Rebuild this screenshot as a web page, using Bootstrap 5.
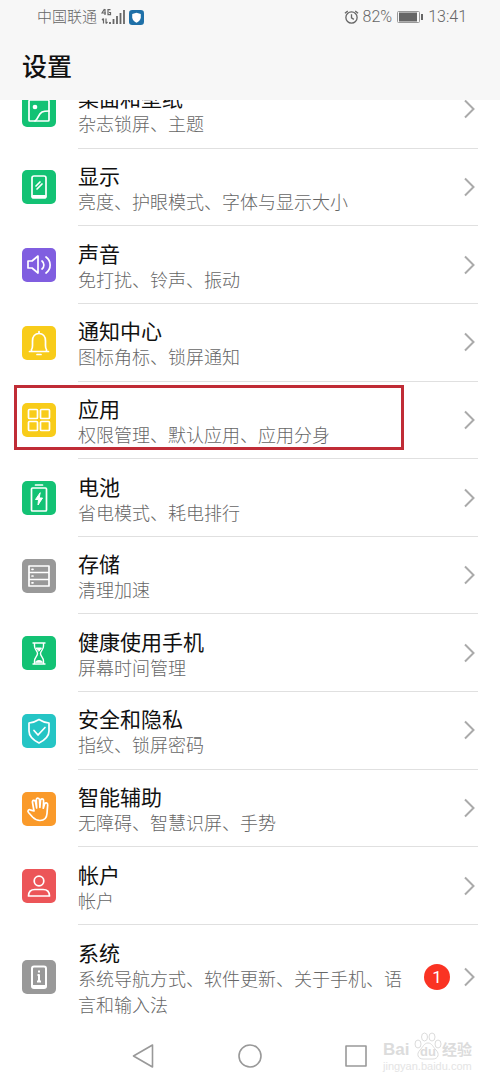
<!DOCTYPE html>
<html lang="zh-CN">
<head>
<meta charset="utf-8">
<meta name="viewport" content="width=device-width, initial-scale=1">
<title>设置</title>
<link href="https://cdn.jsdelivr.net/npm/bootstrap@5.3.0/dist/css/bootstrap.min.css" rel="stylesheet">
<style>
  body { font-family: Roboto, "Noto Sans CJK SC", sans-serif; background: #fff; color: #111; }
  svg { display: block; flex: none; }
  .top-area { background: #f7f7f7; height: 100px; z-index: 3; }
  .status { height: 34px; padding: 0 33px 0 37px; color: #666; font-size: 16px; font-weight: 300; }
  .carrier { font-size: 15px; }
  .page-title { font-size: 25px; line-height: 32px; font-weight: 500; padding: 18px 22px 0; }
  .settings { margin-top: -29px; }
  .setting { flex: 1 0 77px; padding: 0 22px; gap: 22px; color: #111; text-decoration: none; }
  .setting.tall { flex: 0 0 104px; }
  .tile { width: 34px; height: 34px; border-radius: 5px; flex: none; }
  .tile svg { fill: none; stroke: #fff; stroke-width: 1.7; stroke-linejoin: round; stroke-linecap: round; }
  .green { background: #13c274; } .purple { background: #805ee0; } .yellow { background: #f8cc1a; }
  .grey { background: #999; } .teal { background: #25c5c5; } .orange { background: #fa9a2a; } .red { background: #ec5558; }
  .line { border-bottom: 1px solid #e0e0e0; }
  .tall .line { border: 0; }
  .name { font-size: 21px; line-height: 26px; }
  .desc { font-size: 18px; line-height: 26px; font-weight: 300; color: #666; }
  .texts { margin-right: 8px; padding-top: 6px; }
  .chev { fill: none; stroke: #aaa; stroke-width: 2; }
  .count { width: 26px; height: 26px; background: #fa3323; color: #fff; font-size: 17px; line-height: 26px; margin-right: 14px; }
  .marker { border: 3px solid #c02c36; top: 3px; bottom: 9px; left: 14px; right: 96px; }
  .keys { height: 54px; gap: 74px; }
  .keys button { width: 32px; height: 32px; }
  .keys svg { fill: none; stroke: #999; stroke-width: 1.6; stroke-linejoin: round; }
  .wm { right: 28px; bottom: 11px; width: 89px; color: #dcdcdc; font-family: "Liberation Sans", "Noto Sans CJK SC", sans-serif; }
  .wm-brand { font-size: 17px; line-height: 20px; font-weight: 700; }
  .wm-cn { font-size: 15px; }
  .wm-url { font-size: 11px; line-height: 12px; color: #e4e4e4; }
  .paw { width: 28px; height: 28px; }
  .paw svg { fill: #fff; stroke: #dcdcdc; }
  .paw-text { left: 6px; bottom: 0; font-size: 13px; line-height: 16px; }
</style>
</head>
<body>
<div class="d-flex flex-column min-vh-100 position-relative">
  <header class="top-area sticky-top">
    <div class="status d-flex align-items-center">
      <span class="carrier">中国联通</span>
      <svg class="ms-1" width="24" height="18" viewBox="0 0 24 18" fill="none" stroke="#666" stroke-width="1.2" aria-hidden="true">
        <path d="M3.500 1L1 5h4M4 1v6M9.500 1.700H7v5h2.500V4.500H8M2.500 10.500v5M1 12l1.500-1.500M5 10.500v5M6.500 14L5 15.500"/>
        <path stroke-width="1.800" d="M9 16v-2M12.500 16v-5M16 16V8M19.500 16V5M23 16V2"/>
      </svg>
      <svg class="ms-1" width="15" height="15" viewBox="0 0 14 14" aria-hidden="true"><rect width="14" height="14" rx="3" fill="#1f70a8"/><path d="M7 2.500l4 1.300v3c0 2.500-1.800 4-4 5-2.200-1-4-2.500-4-5v-3z" fill="#fff"/></svg>
      <svg class="ms-auto me-1" width="15" height="16" viewBox="0 0 16 16" fill="none" stroke="#666" stroke-width="1.400" aria-hidden="true"><circle cx="8" cy="8.500" r="6"/><path d="M8 5v4l2.500 1.500M1 4l3-2.500M15 4l-3-2.500"/></svg>
      <span>82%</span>
      <svg class="mx-1" width="28" height="14" viewBox="0 0 28 14" aria-hidden="true"><rect x="1.500" y="1.500" width="22" height="11" rx="1" fill="none" stroke="#999"/><rect x="3" y="2.500" width="18" height="9" fill="#666"/><path d="M26 4v6" stroke="#666" stroke-width="2"/></svg>
      <span>13:41</span>
    </div>
    <h1 class="page-title m-0">设置</h1>
  </header>

  <main class="settings d-flex flex-column flex-grow-1">
    <a href="#" class="setting d-flex position-relative">
      <span class="tile green align-self-center"><svg width="34" height="34" viewBox="0 0 34 34"><rect x="7" y="7" width="20" height="21" rx="1"/><circle cx="13" cy="14" r="1.500" fill="#fff"/><path d="M13 28c3-1 3-7 7-9 2-1 4-1 7-1"/></svg></span>
      <span class="line flex-grow-1 d-flex align-items-center"><span class="texts flex-grow-1"><span class="name d-block">桌面和壁纸</span><span class="desc d-block">杂志锁屏、主题</span></span><svg class="chev" width="14" height="20" viewBox="0 0 14 20"><path d="M1 1.500L9.500 10 1 18.500"/></svg></span>
    </a>
    <a href="#" class="setting d-flex position-relative">
      <span class="tile green align-self-center"><svg width="34" height="34" viewBox="0 0 34 34"><rect x="10" y="6" width="14" height="22" rx="2"/><path d="M14 16l4-4M15 19l5-5"/><path stroke-width="3" d="M11 26.500h12"/></svg></span>
      <span class="line flex-grow-1 d-flex align-items-center"><span class="texts flex-grow-1"><span class="name d-block">显示</span><span class="desc d-block">亮度、护眼模式、字体与显示大小</span></span><svg class="chev" width="14" height="20" viewBox="0 0 14 20"><path d="M1 1.500L9.500 10 1 18.500"/></svg></span>
    </a>
    <a href="#" class="setting d-flex position-relative">
      <span class="tile purple align-self-center"><svg width="34" height="34" viewBox="0 0 34 34"><path d="M6 13v7h4l6 5V8l-6 5zM20 13c2.500 2 2.500 6 0 8M24 9c5.500 4 5.500 12 0 16"/></svg></span>
      <span class="line flex-grow-1 d-flex align-items-center"><span class="texts flex-grow-1"><span class="name d-block">声音</span><span class="desc d-block">免打扰、铃声、振动</span></span><svg class="chev" width="14" height="20" viewBox="0 0 14 20"><path d="M1 1.500L9.500 10 1 18.500"/></svg></span>
    </a>
    <a href="#" class="setting d-flex position-relative">
      <span class="tile yellow align-self-center"><svg width="34" height="34" viewBox="0 0 34 34"><path d="M7.500 25.500h19M9.500 25v-1.500c1-1 1-2 1-4V15c0-4.500 2.500-7.500 6.500-7.500s6.500 3 6.500 7.500v4.500c0 2 0 3 1 4V25M17 5.500v1.500M15 28.500h4"/></svg></span>
      <span class="line flex-grow-1 d-flex align-items-center"><span class="texts flex-grow-1"><span class="name d-block">通知中心</span><span class="desc d-block">图标角标、锁屏通知</span></span><svg class="chev" width="14" height="20" viewBox="0 0 14 20"><path d="M1 1.500L9.500 10 1 18.500"/></svg></span>
    </a>
    <a href="#" class="setting d-flex position-relative">
      <span class="tile yellow align-self-center"><svg width="34" height="34" viewBox="0 0 34 34"><rect x="6.500" y="6.500" width="9" height="9" rx="1"/><rect x="18.500" y="6.500" width="9" height="9" rx="1"/><rect x="6.500" y="18.500" width="9" height="9" rx="1"/><rect x="18.500" y="18.500" width="9" height="9" rx="1"/></svg></span>
      <span class="line flex-grow-1 d-flex align-items-center"><span class="texts flex-grow-1"><span class="name d-block">应用</span><span class="desc d-block">权限管理、默认应用、应用分身</span></span><svg class="chev" width="14" height="20" viewBox="0 0 14 20"><path d="M1 1.500L9.500 10 1 18.500"/></svg></span>
      <span class="marker position-absolute"></span>
    </a>
    <a href="#" class="setting d-flex position-relative">
      <span class="tile green align-self-center"><svg width="34" height="34" viewBox="0 0 34 34"><rect x="9.500" y="7" width="15" height="23" rx="1"/><path d="M13.500 4h7"/><path fill="#fff" stroke-width="1" d="M18 12l-4.500 6.500h3L16 24l4.500-7h-3z"/></svg></span>
      <span class="line flex-grow-1 d-flex align-items-center"><span class="texts flex-grow-1"><span class="name d-block">电池</span><span class="desc d-block">省电模式、耗电排行</span></span><svg class="chev" width="14" height="20" viewBox="0 0 14 20"><path d="M1 1.500L9.500 10 1 18.500"/></svg></span>
    </a>
    <a href="#" class="setting d-flex position-relative">
      <span class="tile grey align-self-center"><svg width="34" height="34" viewBox="0 0 34 34"><path d="M7 7h20v20H7zM7 13.500h20M7 20.500h20M10 10.300h1M10 17h1M10 23.800h1"/></svg></span>
      <span class="line flex-grow-1 d-flex align-items-center"><span class="texts flex-grow-1"><span class="name d-block">存储</span><span class="desc d-block">清理加速</span></span><svg class="chev" width="14" height="20" viewBox="0 0 14 20"><path d="M1 1.500L9.500 10 1 18.500"/></svg></span>
    </a>
    <a href="#" class="setting d-flex position-relative">
      <span class="tile green align-self-center"><svg width="34" height="34" viewBox="0 0 34 34"><path stroke-width="1.400" d="M11 7h12M11 28h12M12.500 7v3c0 4 3 4.500 3 7.500s-3 4-3 7.500v3M21.500 7v3c0 4-3 4.500-3 7.500s3 4 3 7.500v3"/><path fill="#fff" stroke-width="1" d="M14.500 12h5L17 15zM13.500 26c1-2 6-2 7 0z"/></svg></span>
      <span class="line flex-grow-1 d-flex align-items-center"><span class="texts flex-grow-1"><span class="name d-block">健康使用手机</span><span class="desc d-block">屏幕时间管理</span></span><svg class="chev" width="14" height="20" viewBox="0 0 14 20"><path d="M1 1.500L9.500 10 1 18.500"/></svg></span>
    </a>
    <a href="#" class="setting d-flex position-relative">
      <span class="tile teal align-self-center"><svg width="34" height="34" viewBox="0 0 34 34"><path d="M17 5.500c3 2 6 3 10 3.500v8c0 5-4 9-10 12-6-3-10-7-10-12V9c4-.5 7-1.500 10-3.500zM12 16.500l4 4.500 7-7.500"/></svg></span>
      <span class="line flex-grow-1 d-flex align-items-center"><span class="texts flex-grow-1"><span class="name d-block">安全和隐私</span><span class="desc d-block">指纹、锁屏密码</span></span><svg class="chev" width="14" height="20" viewBox="0 0 14 20"><path d="M1 1.500L9.500 10 1 18.500"/></svg></span>
    </a>
    <a href="#" class="setting d-flex position-relative">
      <span class="tile orange align-self-center"><svg width="34" height="34" viewBox="0 0 34 34"><path d="M12 19l-1.500-8.500c-.4-2.500 2.500-3 3-.7l1.200 6.200-.4-8c-.1-2.500 3-2.500 3.200 0l.4 7.500.6-7c.2-2.300 3.200-2 3.100.3l-.3 7.400 1.200-4c.6-2.200 3.400-1.600 3.200.6-.3 3.700-.5 5.500-.7 8.700-.3 4.500-2.500 7-7 7-4 0-5.500-1.500-7.500-3.500l-4-4.500c-1.500-1.800.5-3.700 2.300-2.400z"/></svg></span>
      <span class="line flex-grow-1 d-flex align-items-center"><span class="texts flex-grow-1"><span class="name d-block">智能辅助</span><span class="desc d-block">无障碍、智慧识屏、手势</span></span><svg class="chev" width="14" height="20" viewBox="0 0 14 20"><path d="M1 1.500L9.500 10 1 18.500"/></svg></span>
    </a>
    <a href="#" class="setting d-flex position-relative">
      <span class="tile red align-self-center"><svg width="34" height="34" viewBox="0 0 34 34"><circle cx="17" cy="12" r="4.800"/><path d="M6.500 27c0-4.500 3-6.500 6.500-6.500h8c3.500 0 6.500 2 6.500 6.500z"/></svg></span>
      <span class="line flex-grow-1 d-flex align-items-center"><span class="texts flex-grow-1"><span class="name d-block">帐户</span><span class="desc d-block">帐户</span></span><svg class="chev" width="14" height="20" viewBox="0 0 14 20"><path d="M1 1.500L9.500 10 1 18.500"/></svg></span>
    </a>
    <a href="#" class="setting tall d-flex position-relative">
      <span class="tile grey align-self-center"><svg width="34" height="34" viewBox="0 0 34 34"><rect x="10" y="6.500" width="14" height="21.500" rx="2" stroke-width="2"/><path stroke-width="3" d="M11 26.500h12"/><path stroke-width="2" stroke-linecap="butt" d="M16 11.500h2M15.500 15H17v6M15 21.500h4"/></svg></span>
      <span class="line flex-grow-1 d-flex align-items-center"><span class="texts flex-grow-1"><span class="name d-block">系统</span><span class="desc d-block">系统导航方式、软件更新、关于手机、语言和输入法</span></span><span class="count rounded-circle text-center flex-shrink-0">1</span><svg class="chev" width="14" height="20" viewBox="0 0 14 20"><path d="M1 1.500L9.500 10 1 18.500"/></svg></span>
    </a>
  </main>

  <nav class="keys d-flex justify-content-center align-items-center" aria-label="导航键">
    <button type="button" class="btn p-0 border-0 d-flex align-items-center justify-content-center" aria-label="返回"><svg width="24" height="24" viewBox="0 0 24 24"><path d="M20.500 1v22L1.500 12z"/></svg></button>
    <button type="button" class="btn p-0 border-0 d-flex align-items-center justify-content-center" aria-label="主页"><svg width="24" height="24" viewBox="0 0 24 24"><circle cx="12" cy="12" r="11"/></svg></button>
    <button type="button" class="btn p-0 border-0 d-flex align-items-center justify-content-center" aria-label="最近任务"><svg width="24" height="24" viewBox="0 0 24 24"><rect x="2" y="2" width="20" height="20"/></svg></button>
  </nav>

  <div class="wm position-absolute">
    <div class="wm-brand d-flex align-items-end">
      <span>Bai</span>
      <span class="paw position-relative ms-auto">
        <svg width="28" height="28" viewBox="0 0 28 28" aria-hidden="true"><ellipse cx="4" cy="12" rx="3" ry="4"/><ellipse cx="10.500" cy="5" rx="3" ry="4"/><ellipse cx="18" cy="5" rx="3" ry="4"/><ellipse cx="24" cy="12" rx="3" ry="4"/><path d="M14 11c4 0 5 4 8 7 4 4 2 9-3 9-3 0-7 0-10 0-5 0-7-5-3-9 3-3 4-7 8-7z"/></svg>
        <span class="paw-text position-absolute">du</span>
      </span>
      <span class="wm-cn">经验</span>
    </div>
    <div class="wm-url">jingyan.baidu.com</div>
  </div>
</div>
<script src="https://cdn.jsdelivr.net/npm/bootstrap@5.3.0/dist/js/bootstrap.bundle.min.js"></script>
</body>
</html>
